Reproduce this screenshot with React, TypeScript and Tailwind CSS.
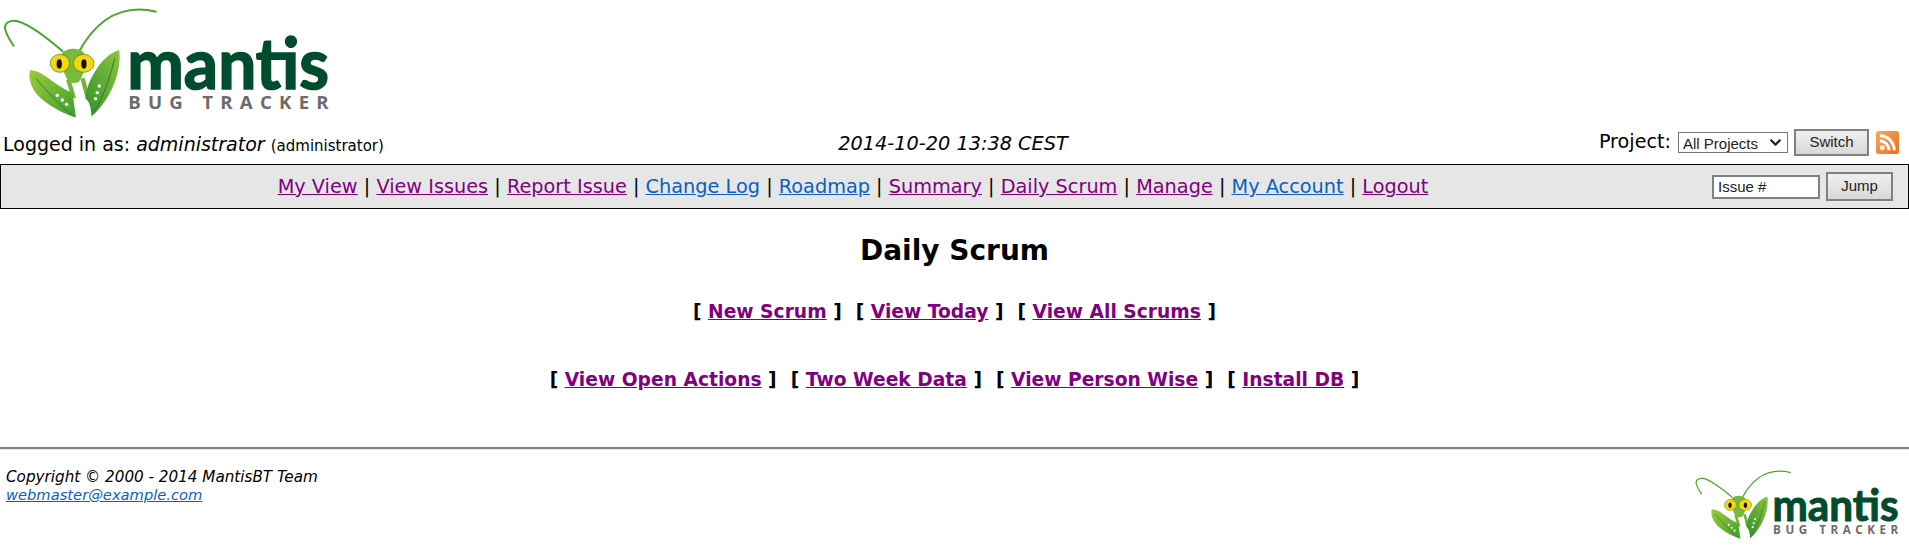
import {ChevronDown} from 'lucide-react';

const sans = "font-['DejaVu_Sans',Verdana,sans-serif]";
const ui = "font-['Liberation_Sans',Arial,sans-serif]";

const visited = 'text-[#800080] underline';
const fresh = 'text-[#0a5fc4] underline';

const navLinks = [
  {label: 'My View', cls: visited},
  {label: 'View Issues', cls: visited},
  {label: 'Report Issue', cls: visited},
  {label: 'Change Log', cls: fresh},
  {label: 'Roadmap', cls: fresh},
  {label: 'Summary', cls: visited},
  {label: 'Daily Scrum', cls: visited},
  {label: 'Manage', cls: visited},
  {label: 'My Account', cls: fresh},
  {label: 'Logout', cls: visited},
];

function Logo({className, id}: {className: string; id: string}) {
  return (
    <svg viewBox="0 0 1000 375" className={className}>
      <defs>
        <linearGradient id={id + 'l'} x1="0" y1="0" x2="1" y2="1">
          <stop offset="0" stopColor="#9ccb3c" />
          <stop offset="1" stopColor="#3f9d2f" />
        </linearGradient>
        <linearGradient id={id + 'r'} x1="1" y1="0" x2="0" y2="1">
          <stop offset="0" stopColor="#8ec63f" />
          <stop offset="1" stopColor="#2f8f2c" />
        </linearGradient>
      </defs>
      <path d="M190 152C140 110 90 70 50 60C25 55 8 70 18 92C23 107 35 125 42 136" fill="none" stroke="#4ea72e" strokeWidth="6" />
      <path d="M235 156C270 90 340 0 470 32" fill="none" stroke="#4ea72e" strokeWidth="6" />
      <path d="M205 235L222 292M248 232L262 285" fill="none" stroke="#6fb536" strokeWidth="13" />
      <path d="M90 208C125 205 165 255 218 276L222 305L228 350C180 335 120 300 100 265C90 245 85 225 90 208Z" fill={`url(#${id}l)`} />
      <path d="M358 148C366 200 340 290 275 347C273 322 270 302 256 292C262 250 275 225 300 190C320 165 345 150 358 148Z" fill={`url(#${id}r)`} />
      <path d="M108 232C140 270 180 315 222 346" fill="none" stroke="#2f7d2a" strokeWidth="3" />
      <path d="M345 170C330 230 310 290 280 338" fill="none" stroke="#2f7d2a" strokeWidth="3" />
      <g fill="#fff">
        <circle cx="172" cy="283" r="5" /><circle cx="187" cy="297" r="5" /><circle cx="200" cy="310" r="5" />
        <circle cx="298" cy="255" r="5" /><circle cx="292" cy="275" r="5" /><circle cx="287" cy="293" r="5" />
      </g>
      <path d="M186 158C198 140 238 138 252 156C262 175 250 230 236 243C222 250 208 245 200 232C190 210 180 178 186 158Z" fill="#76bc3a" />
      <ellipse cx="180" cy="187" rx="29" ry="27" fill="#f5d60f" stroke="#3d7a1f" strokeWidth="2" />
      <ellipse cx="251" cy="187" rx="31" ry="27" fill="#f5d60f" stroke="#3d7a1f" strokeWidth="2" />
      <ellipse cx="178" cy="189" rx="8" ry="14" fill="#111" />
      <ellipse cx="252" cy="189" rx="8" ry="14" fill="#111" />
      <text x="382" y="265" textLength="606" lengthAdjust="spacingAndGlyphs" fontFamily="Lato, sans-serif" fontWeight="700" fontSize="210" fill="#004d2e" stroke="#004d2e" strokeWidth="5">mantis</text>
      <text x="385" y="325" textLength="602" lengthAdjust="spacing" fontFamily="'Open Sans', sans-serif" fontWeight="700" fontSize="56" fill="#6b6b6b">BUG TRACKER</text>
    </svg>
  );
}

function RssIcon() {
  return (
    <svg viewBox="0 0 24 24" className="w-[23px] h-[23px]">
      <defs>
        <linearGradient id="rss" x1="0" y1="0" x2="1" y2="1">
          <stop offset="0" stopColor="#f9a85a" />
          <stop offset="1" stopColor="#e8711a" />
        </linearGradient>
      </defs>
      <rect width="24" height="24" rx="3" fill="url(#rss)" />
      <circle cx="6.5" cy="17.5" r="2.6" fill="#fff" />
      <path d="M4 10.5a9.5 9.5 0 0 1 9.5 9.5M4 5a15 15 0 0 1 15 15" fill="none" stroke="#fff" strokeWidth="3.2" />
    </svg>
  );
}

function GrayButton({label, className}: {label: string; className: string}) {
  return (
    <button className={`${ui} ${className} text-[15px] text-[#222] border-2 border-[#808080] bg-gradient-to-b from-[#f0f0f0] to-[#d8d8d8]`}>
      {label}
    </button>
  );
}

function ActionRow({links}: {links: string[]}) {
  return (
    <div className={`${sans} flex justify-center gap-[14px] text-[18.7px] leading-[27px] font-bold text-black`}>
      {links.map((link) => (
        <span key={link}>
          [ <a className={visited}>{link}</a> ]
        </span>
      ))}
    </div>
  );
}

export default function App() {
  return (
    <div className={`${sans} w-[1909px] h-[547px] overflow-hidden bg-white text-black`}>
      <div className="h-[125px] pt-[1px]">
        <Logo className="w-[333px] h-[125px]" id="top" />
      </div>

      <div className="grid grid-cols-3 items-center h-[39px] pb-[1px] pl-[3px] pr-[10px]">
        <div className="text-[19px] whitespace-nowrap">
          Logged in as: <em>administrator</em> <span className="text-[15px]">(administrator)</span>
        </div>
        <div className="text-[19.3px] italic text-center whitespace-nowrap pl-[4px]">2014-10-20 13:38 CEST</div>
        <div className="flex items-center justify-end mb-[3px]">
          <span className="text-[19.2px] mr-[7px]">Project:</span>
          <div className="relative w-[110px] h-[21px] mr-[6px]">
            <select className={`${ui} w-full h-full pl-[4px] text-[15px] text-[#222] border border-[#767676] bg-white appearance-none`} defaultValue="all">
              <option value="all">All Projects</option>
            </select>
            <ChevronDown className="absolute right-[4px] top-[2px] w-[17px] h-[17px] text-[#222]" strokeWidth={3} />
          </div>
          <GrayButton label="Switch" className="w-[75px] h-[27px] mr-[7px]" />
          <RssIcon />
        </div>
      </div>

      <div className="flex items-center h-[45px] border border-black bg-[#e6e6e6]">
        <div className="flex-1 text-center text-[19.3px] whitespace-nowrap pt-[2px] pr-[7px]">
          {navLinks.map((link, index) => (
            <span key={link.label}>
              {index > 0 && ' | '}
              <a className={link.cls}>{link.label}</a>
            </span>
          ))}
        </div>
        <div className="w-[196px] flex items-center">
          <input
            className={`${ui} w-[108px] h-[24px] px-[4px] text-[15px] text-[#222] border-2 border-[#808080] bg-white`}
            defaultValue="Issue #"
          />
          <GrayButton label="Jump" className="w-[67px] h-[29px] ml-[6px]" />
        </div>
      </div>

      <h1 className="text-[28px] font-bold text-center mt-[26px] leading-[32px]">Daily Scrum</h1>
      <div className="mt-[31px]">
        <ActionRow links={['New Scrum', 'View Today', 'View All Scrums']} />
      </div>
      <div className="mt-[41px]">
        <ActionRow links={['View Open Actions', 'Two Week Data', 'View Person Wise', 'Install DB']} />
      </div>

      <hr className="mt-[54px] border-0 border-t-2 border-t-[#808080] border-b border-b-[#e5e5e5]" />

      <div className="flex justify-between pl-[6px] pr-[8px]">
        <div className="pt-[18px] text-[15.2px] leading-[18px] italic">
          <div>Copyright © 2000 - 2014 MantisBT Team</div>
          <a className={`${fresh} text-[14.7px]`}>webmaster@example.com</a>
        </div>
        <Logo className="w-[208px] h-[78px] mt-[16px]" id="foot" />
      </div>
    </div>
  );
}
